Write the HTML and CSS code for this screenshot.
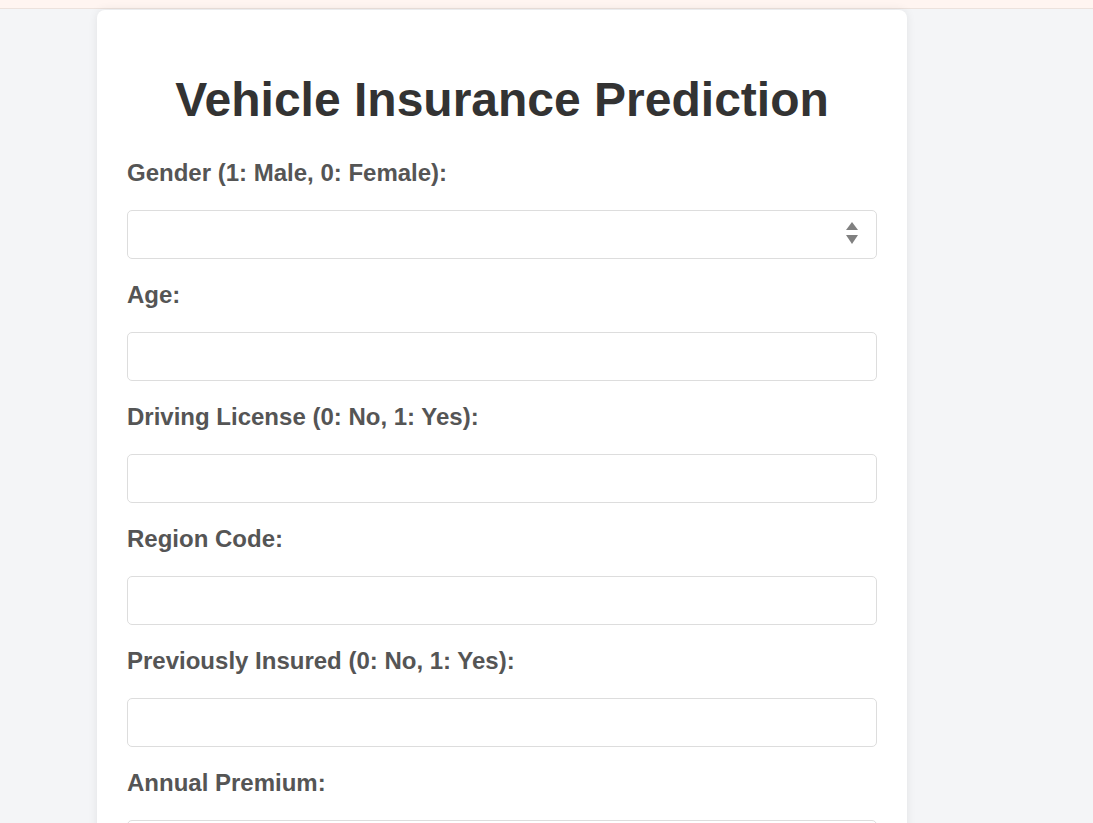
FILE: index.html
```html
<!DOCTYPE html>
<html lang="en">
<head>
<meta charset="utf-8">
<title>Vehicle Insurance Prediction</title>
<link rel="stylesheet" href="styles.css">
</head>
<body>
<div class="topband"></div>
<div class="card">
  <h1 class="title">Vehicle Insurance Prediction</h1>
  <form class="form">
    <label class="label" for="gender">Gender (1: Male, 0: Female):</label>
    <div class="select-wrap">
      <select class="field select" id="gender">
        <option value=""></option>
        <option value="1">1</option>
        <option value="0">0</option>
      </select>
      <svg class="select-icon" width="12" height="24" viewBox="0 0 12 24" aria-hidden="true">
        <path d="M6 0 L12 8 L0 8 Z" fill="#808080"/>
        <path d="M0 13 L12 13 L6 22 Z" fill="#808080"/>
      </svg>
    </div>
    <label class="label" for="age">Age:</label>
    <input class="field" id="age" type="text">
    <label class="label" for="dl">Driving License (0: No, 1: Yes):</label>
    <input class="field" id="dl" type="text">
    <label class="label" for="region">Region Code:</label>
    <input class="field" id="region" type="text">
    <label class="label" for="prev">Previously Insured (0: No, 1: Yes):</label>
    <input class="field" id="prev" type="text">
    <label class="label" for="premium">Annual Premium:</label>
    <input class="field" id="premium" type="text">
  </form>
</div>
</body>
</html>
```
FILE: styles.css
```css
html, body {
  margin: 0;
  padding: 0;
}
body {
  background: #f4f5f7;
  font-family: "Liberation Sans", Arial, sans-serif;
  height: 823px;
  overflow: hidden;
}
.topband {
  height: 8px;
  background: #fff5f1;
  border-bottom: 1px solid #ece2dd;
}
.card {
  width: 750px;
  margin: 1px 0 0 97px;
  padding: 30px;
  background: #ffffff;
  border-radius: 8px;
  box-shadow: 0 0 10px rgba(0, 0, 0, 0.08);
}
.title {
  margin: 32px 0;
  font-size: 48px;
  line-height: 55px;
  font-weight: bold;
  color: #333333;
  text-align: center;
}
.form {
  display: flex;
  flex-direction: column;
}
.label {
  display: block;
  font-size: 24px;
  line-height: 28px;
  font-weight: bold;
  color: #555555;
  margin-bottom: 23px;
}
.field {
  box-sizing: border-box;
  width: 100%;
  height: 49px;
  margin: 0 0 22px 0;
  padding: 0 12px;
  border: 1px solid #dddddd;
  border-radius: 5px;
  background: #ffffff;
  font-family: "Liberation Sans", Arial, sans-serif;
  font-size: 16px;
  outline: none;
}
.select-wrap {
  position: relative;
}
.select {
  appearance: none;
  -webkit-appearance: none;
}
.select-icon {
  position: absolute;
  right: 19px;
  top: 12px;
  pointer-events: none;
}
```
